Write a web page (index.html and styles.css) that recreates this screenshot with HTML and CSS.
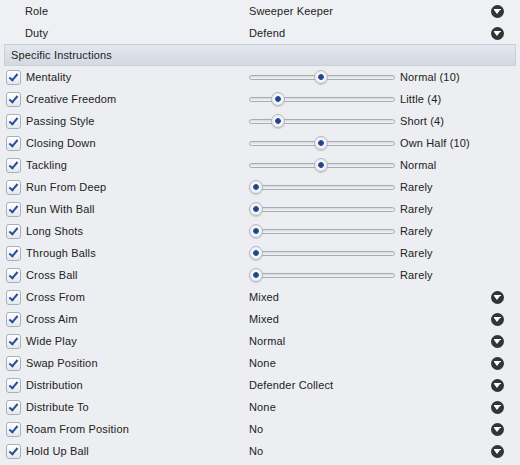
FILE: index.html
```html
<!DOCTYPE html>
<html>
<head>
<meta charset="utf-8">
<link rel="stylesheet" href="styles.css">
</head>
<body>
<div class="panel">
  <div class="row top"><span class="label">Role</span><span class="value">Sweeper Keeper</span><span class="dd"></span></div>
  <div class="row top"><span class="label">Duty</span><span class="value">Defend</span><span class="dd"></span></div>
  <div class="header">Specific Instructions</div>

  <div class="row"><span class="cb"></span><span class="label">Mentality</span><span class="slider"><span class="track"></span><span class="knob" style="left:65px"></span></span><span class="sval">Normal (10)</span></div>
  <div class="row"><span class="cb"></span><span class="label">Creative Freedom</span><span class="slider"><span class="track"></span><span class="knob" style="left:22px"></span></span><span class="sval">Little (4)</span></div>
  <div class="row"><span class="cb"></span><span class="label">Passing Style</span><span class="slider"><span class="track"></span><span class="knob" style="left:22px"></span></span><span class="sval">Short (4)</span></div>
  <div class="row"><span class="cb"></span><span class="label">Closing Down</span><span class="slider"><span class="track"></span><span class="knob" style="left:65px"></span></span><span class="sval">Own Half (10)</span></div>
  <div class="row"><span class="cb"></span><span class="label">Tackling</span><span class="slider"><span class="track"></span><span class="knob" style="left:65px"></span></span><span class="sval">Normal</span></div>
  <div class="row"><span class="cb"></span><span class="label">Run From Deep</span><span class="slider"><span class="track"></span><span class="knob" style="left:0px"></span></span><span class="sval">Rarely</span></div>
  <div class="row"><span class="cb"></span><span class="label">Run With Ball</span><span class="slider"><span class="track"></span><span class="knob" style="left:0px"></span></span><span class="sval">Rarely</span></div>
  <div class="row"><span class="cb"></span><span class="label">Long Shots</span><span class="slider"><span class="track"></span><span class="knob" style="left:0px"></span></span><span class="sval">Rarely</span></div>
  <div class="row"><span class="cb"></span><span class="label">Through Balls</span><span class="slider"><span class="track"></span><span class="knob" style="left:0px"></span></span><span class="sval">Rarely</span></div>
  <div class="row"><span class="cb"></span><span class="label">Cross Ball</span><span class="slider"><span class="track"></span><span class="knob" style="left:0px"></span></span><span class="sval">Rarely</span></div>

  <div class="row"><span class="cb"></span><span class="label">Cross From</span><span class="value">Mixed</span><span class="dd"></span></div>
  <div class="row"><span class="cb"></span><span class="label">Cross Aim</span><span class="value">Mixed</span><span class="dd"></span></div>
  <div class="row"><span class="cb"></span><span class="label">Wide Play</span><span class="value">Normal</span><span class="dd"></span></div>
  <div class="row"><span class="cb"></span><span class="label">Swap Position</span><span class="value">None</span><span class="dd"></span></div>
  <div class="row"><span class="cb"></span><span class="label">Distribution</span><span class="value">Defender Collect</span><span class="dd"></span></div>
  <div class="row"><span class="cb"></span><span class="label">Distribute To</span><span class="value">None</span><span class="dd"></span></div>
  <div class="row"><span class="cb"></span><span class="label">Roam From Position</span><span class="value">No</span><span class="dd"></span></div>
  <div class="row"><span class="cb"></span><span class="label">Hold Up Ball</span><span class="value">No</span><span class="dd"></span></div>
</div>
</body>
</html>
```
FILE: styles.css
```css
html, body {
  margin: 0;
  padding: 0;
  background: #eceef1;
}
body {
  font-family: "Liberation Sans", Arial, sans-serif;
  font-size: 11px;
  letter-spacing: 0.15px;
  color: #222;
  width: 520px;
  height: 465px;
  overflow: hidden;
}
.panel {
  display: flex;
  flex-direction: column;
}
.row {
  display: flex;
  align-items: center;
  height: 22px;
  padding-left: 6px;
}
.row.top {
  padding-left: 25px;
  background: #eef0f3;
}
.label {
  width: 223px;
  flex: none;
}
.row.top .label {
  width: 224px;
}
.cb {
  flex: none;
  width: 13px;
  height: 13px;
  border: 1px solid #a9b0ba;
  border-radius: 3px;
  background: linear-gradient(#ffffff, #e4e8ee);
  margin-right: 5px;
  position: relative;
  box-sizing: content-box;
}
.cb::after {
  content: "";
  position: absolute;
  left: 4px;
  top: 1px;
  width: 3px;
  height: 7px;
  border: solid #2b4f96;
  border-width: 0 2px 2px 0;
  transform: rotate(40deg);
}
.value {
  flex: 1;
}
.dd {
  flex: none;
  width: 13px;
  height: 13px;
  border-radius: 50%;
  background: #333436;
  margin-right: 16px;
  position: relative;
}
.dd::before {
  content: "";
  position: absolute;
  left: 3px;
  top: 4px;
  width: 7px;
  height: 1px;
  background: #fff;
}
.dd::after {
  content: "";
  position: absolute;
  left: 3px;
  top: 5px;
  border-left: 3.5px solid transparent;
  border-right: 3.5px solid transparent;
  border-top: 4px solid #fff;
}
.header {
  height: 20px;
  margin: 0 4px;
  border: 1px solid #c9d0da;
  background: linear-gradient(#e3e7ed, #d3dae4);
  display: flex;
  align-items: center;
  padding-left: 6px;
  color: #222;
}
.slider {
  flex: none;
  position: relative;
  width: 146px;
  height: 16px;
  margin-right: 5px;
}
.track {
  position: absolute;
  left: 0;
  right: 0;
  top: 6px;
  height: 3px;
  border: 1px solid #a6acb4;
  border-radius: 3px;
  background: linear-gradient(#d6d9de, #f4f5f7);
}
.knob {
  position: absolute;
  top: 1px;
  width: 12px;
  height: 12px;
  border: 1px solid #b4b9c0;
  border-radius: 50%;
  background: radial-gradient(circle, #213f80 0, #2a4d92 2.5px, #f6f7f9 3.2px, #e2e5ea 100%);
  box-shadow: 0 1px 1px rgba(0,0,0,0.15);
}
.sval {
  flex: 1;
}
```
